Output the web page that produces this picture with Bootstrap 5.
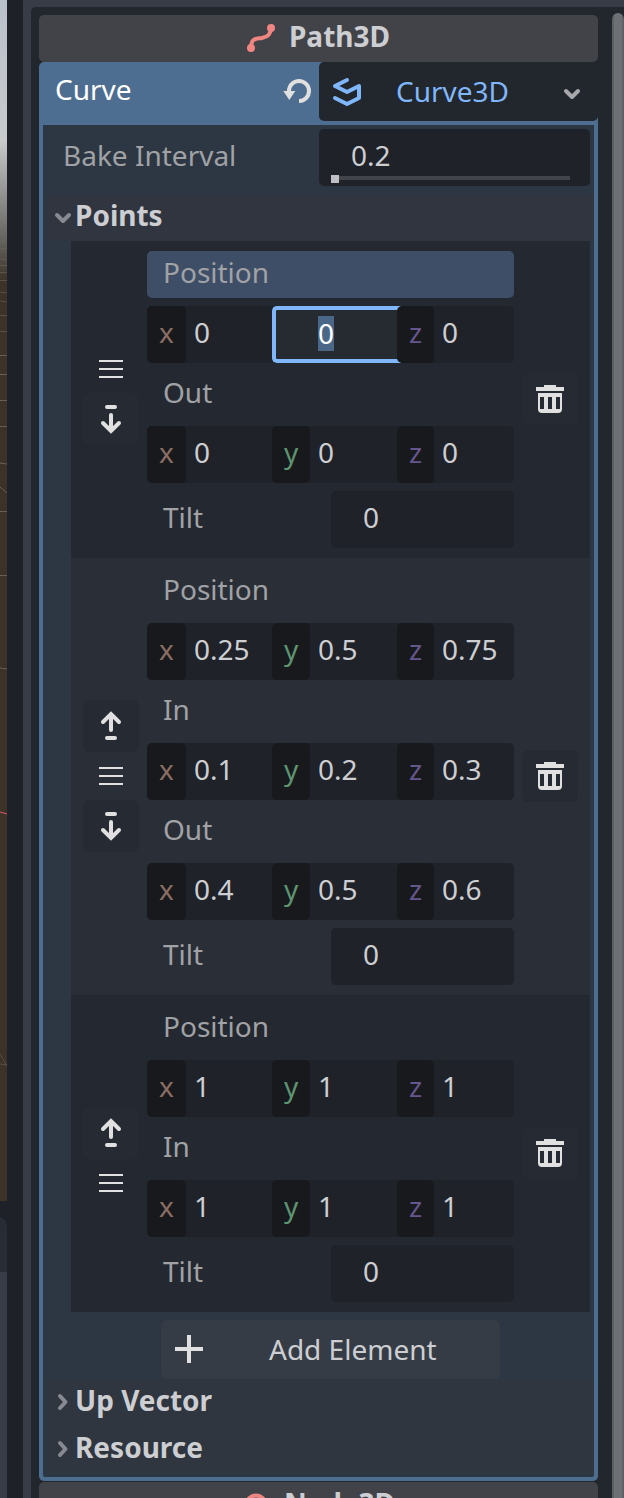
<!DOCTYPE html>
<html lang="en" data-bs-theme="dark">
<head>
<meta charset="utf-8">
<meta name="viewport" content="width=device-width, initial-scale=1">
<title>Inspector</title>
<link href="https://cdn.jsdelivr.net/npm/bootstrap@5.3.0/dist/css/bootstrap.min.css" rel="stylesheet">
<script src="https://cdn.jsdelivr.net/npm/bootstrap@5.3.0/dist/js/bootstrap.bundle.min.js" defer></script>
<style>
  body { font: 28px/38px "Noto Sans", sans-serif; background: #373c47; color: #cdced2; height: 1498px; overflow: hidden; }
  svg { display: block; flex: none; }
  .ico { width: 32px; height: 32px; color: #e0e0e0; }
  .side { width: 7px; }
  .splitter { width: 16px; background: #1e2128; }
  .dock { margin: 7px 0 0 8px; padding: 8px 0 0 8px; background: #22262d; border-top-left-radius: 5px; width: 593px; height: 1491px; }
  .inspector { width: 559px; }
  .scroller { width: 12px; margin: -2px 0 0 14px; border-radius: 6px 6px 0 0; background: linear-gradient(90deg, #5d6062 0 2px, #6d7074 2px 10px, #5f6264 10px); }
  .cat { height: 47px; padding-bottom: 5px; gap: 12px; background: #424349; border-radius: 5px; font-weight: 700; }
  .cat .ico { margin: 4px 0 0 -2px; color: #ef8681; }
  .res { background: #4e6e91; border-radius: 5px 0 5px 5px; height: 1419px; padding: 0 4px 4px; margin-bottom: 1px; }
  .res-head { height: 63px; color: #fff; margin: 0 -4px; }
  .res-head .nm { padding: 8px 0 0 16px; width: 241px; }
  .res-head .undo { margin-top: 13px; }
  .pick { width: 279px; height: 59px; background: #22262d; color: #80b7fb; border-radius: 5px 0 5px 5px; padding-left: 12px; }
  .pick .ico { color: #80b7fb; }
  .pick .txt { margin: -2px 0 0 33px; width: 163px; }
  .pick .arrow { margin: 4px 0 0 -3px; color: #a6a8ab; }
  .res-body { background: #2d3743; height: 1352px; border-radius: 0 0 2px 2px; }
  .bake { height: 69px; padding: 4px 4px 0 20px; }
  .bake .fld { width: 271px; padding-left: 32px; }
  .bake .nm { color: #a0a2a5; margin-top: 7px; width: 256px; }
  .fld { height: 57px; background: #1f2229; border-radius: 5px; padding-top: 7px; position: relative; white-space: pre; }
  .track { position: absolute; left: 12px; top: 47px; width: 239px; height: 4px; background: #424449; }
  .grab { position: absolute; left: 0; top: -1px; width: 8px; height: 8px; background: #bfc0c5; }
  .sect { height: 47px; margin-left: 4px; padding: 2px 0 0 28px; background: #303540; font-weight: 700; position: relative; }
  .sect svg { position: absolute; left: 0; top: 8px; color: #878a91; }
  .sect.tail { background: #303640; }
  .sect.tail svg { top: 7px; }
  .items { margin: 0 4px 0 28px; }
  .pt { background: #242830; padding: 10px 12px; }
  .pt.alt { background: #2a2e37; }
  .pt .moves { width: 56px; padding-bottom: 1px; gap: 8px; margin-right: 8px; }
  .sq { width: 56px; height: 52px; padding: 0; border: 0; border-radius: 6px; background: #262a32; display: flex; align-items: center; justify-content: center; }
  .trash { margin: 0 0 1px 8px; }
  .props { width: 367px; gap: 8px; }
  .lbl { height: 47px; padding: 2px 0 0 16px; color: #a0a2a5; border-radius: 5px; }
  .lbl.on { background: #3f4e67; }
  .vec { height: 57px; background: #1f2229; border-radius: 5px; display: grid; grid-template-columns: 39px 86px 38px 87px 37px 80px; }
  .vec > span { padding: 7px 0 0 8px; white-space: nowrap; }
  .vec > b { font-weight: 400; background: #18191d; border-radius: 5px; padding: 7px 0 0 12px; position: relative; z-index: 2; }
  .ax { color: #8b6d63; } .ay { color: #5e9470; } .az { color: #65578e; }
  .vec > .edit { grid-column: span 2; background: #262b32; border: 4px solid #80b7fb; border-right: 0; border-radius: 5px 0 0 5px; margin-right: -4px; padding: 6px 0 0 42px; color: #fff; line-height: 35px; }
  .edit i { font-style: normal; display: inline-block; background: #4b6788; height: 35px; line-height: 35px; }
  .tilt { height: 57px; }
  .tilt .lbl { width: 184px; padding-top: 7px; }
  .tilt .fld { width: 183px; padding-left: 32px; }
  .add { width: 339px; height: 59px; margin: 8px 0 0 118px; border: 0; border-radius: 6px; background: #363c46; color: #cdced2; font-size: 28px; line-height: 38px; padding: 0 0 2px 12px; display: flex; align-items: center; }
  .add .ico { margin-right: 64px; }
</style>
</head>
<body>
<svg width="0" height="0" class="position-absolute">
  <defs>
    <symbol id="grip" viewBox="0 0 32 32"><path d="M4 8h24M4 16h24M4 24h24" stroke="currentColor" stroke-width="2"/></symbol>
    <symbol id="down" viewBox="0 0 32 32"><path d="M12 4h8M16 12v15M8 20l8 8 8-8" fill="none" stroke="currentColor" stroke-width="4" stroke-linecap="round"/></symbol>
    <symbol id="up" viewBox="0 0 32 32"><path d="M12 28h8M16 20V5M8 12l8-8 8 8" fill="none" stroke="currentColor" stroke-width="4" stroke-linecap="round"/></symbol>
    <symbol id="bin" viewBox="0 0 32 32"><path fill="currentColor" fill-rule="evenodd" d="M10 2h12v2h8v4H2V4h8zM4 10h24v16q0 4-4 4H8q-4 0-4-4zM6 14v12h4V14zM14 14v12h4V14zM22 14v12h4V14z"/></symbol>
    <symbol id="chev-d" viewBox="0 0 32 32"><path d="M10 13l6 6 6-6" fill="none" stroke="currentColor" stroke-width="4" stroke-linecap="round" stroke-linejoin="round"/></symbol>
    <symbol id="chev-r" viewBox="0 0 32 32"><path d="M13 10l5.500 6-5.500 6" fill="none" stroke="currentColor" stroke-width="4" stroke-linecap="round" stroke-linejoin="round"/></symbol>
  </defs>
</svg>

<div class="d-flex">
  <!-- edge of the 3D viewport -->
  <svg class="side" width="7" height="1498">
    <defs><linearGradient id="sky" x2="0" y2="1"><stop offset="0" stop-color="#bac0cb"/><stop offset=".5" stop-color="#c8cacc"/><stop offset=".67" stop-color="#989998"/><stop offset=".86" stop-color="#64625e"/><stop offset="1" stop-color="#3d342a"/></linearGradient></defs>
    <path fill="#3c3228" d="M0 0h7v1201H0z"/>
    <path fill="url(#sky)" d="M0 0h7v280H0z"/>
    <path d="M0 241.500h7M0 248.500h7M0 259l7 1M0 265.500h7M0 272.500h7M0 280.500h7M0 292l7 1M0 301l7 1M0 315.500h7M0 331.500h7M0 1054l7 12M0 1064l7 1" stroke="#6d6861" stroke-opacity=".55" fill="none"/>
    <path d="M0 355.500h7M0 374.500h7M0 400.500h7M0 426.500h7M0 463l7 1M0 487l7 6M0 511.500h7M0 575.500h7M0 668l7 1" stroke="#716b63" stroke-opacity=".8" fill="none"/>
    <path d="M0 812l7 2" stroke="#dc5568" fill="none"/>
    <path fill="#1e2128" d="M0 1201h7v71H0z"/>
    <path fill="#282c34" d="M0 1217q7 2 7 10v45H0z"/>
    <path fill="#373c47" d="M0 1272h7v226H0z"/>
  </svg>
  <div class="splitter"></div>

  <main class="dock d-flex">
    <div class="inspector">
      <div class="cat d-flex align-items-center justify-content-center">
        <svg class="ico" viewBox="0 0 32 32"><path d="M6 26C6 15 12 17 17 16S26 13 26 6" fill="none" stroke="currentColor" stroke-width="4"/><circle cx="6" cy="26" r="4" fill="currentColor"/><circle cx="26" cy="6" r="4" fill="currentColor"/></svg>
        <span>Path3D</span>
      </div>

      <section class="res">
        <div class="res-head d-flex">
          <div class="nm">Curve</div>
          <svg class="ico undo" viewBox="0 0 32 32"><path d="M9 17A10 10 0 1 1 19 27" transform="translate(0 -1)" fill="none" stroke="currentColor" stroke-width="4"/><path d="M3.300 16h12L9.300 25z" fill="currentColor"/></svg>
          <div class="pick d-flex align-items-center ms-auto">
            <svg class="ico" viewBox="0 0 32 32"><path d="M16 4L4 10l12 6 12-6v12l-12 6-12-6" fill="none" stroke="currentColor" stroke-width="4" stroke-linecap="round" stroke-linejoin="round"/></svg>
            <span class="txt">Curve3D</span>
            <svg class="ico arrow"><use href="#chev-d"/></svg>
          </div>
        </div>

        <div class="res-body">
          <div class="bake d-flex">
            <div class="nm">Bake Interval</div>
            <div class="fld">0.2<div class="track"><div class="grab"></div></div></div>
          </div>
          <div class="sect"><svg class="ico"><use href="#chev-d"/></svg>Points</div>

          <div class="items">
            <div class="pt d-flex align-items-center">
              <div class="moves d-flex flex-column align-items-center">
                <svg class="ico"><use href="#grip"/></svg>
                <button class="sq"><svg class="ico"><use href="#down"/></svg></button>
              </div>
              <div class="props d-flex flex-column">
                <div class="lbl on">Position</div>
                <div class="vec"><b class="ax">x</b><span>0</span><span class="edit"><i>0</i></span><b class="az">z</b><span>0</span></div>
                <div class="lbl">Out</div>
                <div class="vec"><b class="ax">x</b><span>0</span><b class="ay">y</b><span>0</span><b class="az">z</b><span>0</span></div>
                <div class="tilt d-flex"><div class="lbl">Tilt</div><div class="fld">0</div></div>
              </div>
              <button class="sq trash"><svg class="ico"><use href="#bin"/></svg></button>
            </div>

            <div class="pt alt d-flex align-items-center">
              <div class="moves d-flex flex-column align-items-center">
                <button class="sq"><svg class="ico"><use href="#up"/></svg></button>
                <svg class="ico"><use href="#grip"/></svg>
                <button class="sq"><svg class="ico"><use href="#down"/></svg></button>
              </div>
              <div class="props d-flex flex-column">
                <div class="lbl">Position</div>
                <div class="vec"><b class="ax">x</b><span>0.25</span><b class="ay">y</b><span>0.5</span><b class="az">z</b><span>0.75</span></div>
                <div class="lbl">In</div>
                <div class="vec"><b class="ax">x</b><span>0.1</span><b class="ay">y</b><span>0.2</span><b class="az">z</b><span>0.3</span></div>
                <div class="lbl">Out</div>
                <div class="vec"><b class="ax">x</b><span>0.4</span><b class="ay">y</b><span>0.5</span><b class="az">z</b><span>0.6</span></div>
                <div class="tilt d-flex"><div class="lbl">Tilt</div><div class="fld">0</div></div>
              </div>
              <button class="sq trash"><svg class="ico"><use href="#bin"/></svg></button>
            </div>

            <div class="pt d-flex align-items-center">
              <div class="moves d-flex flex-column align-items-center">
                <button class="sq"><svg class="ico"><use href="#up"/></svg></button>
                <svg class="ico"><use href="#grip"/></svg>
              </div>
              <div class="props d-flex flex-column">
                <div class="lbl">Position</div>
                <div class="vec"><b class="ax">x</b><span>1</span><b class="ay">y</b><span>1</span><b class="az">z</b><span>1</span></div>
                <div class="lbl">In</div>
                <div class="vec"><b class="ax">x</b><span>1</span><b class="ay">y</b><span>1</span><b class="az">z</b><span>1</span></div>
                <div class="tilt d-flex"><div class="lbl">Tilt</div><div class="fld">0</div></div>
              </div>
              <button class="sq trash"><svg class="ico"><use href="#bin"/></svg></button>
            </div>
          </div>

          <button class="add"><svg class="ico" viewBox="0 0 32 32"><path d="M2 16h28M16 2v28" stroke="currentColor" stroke-width="4"/></svg>Add Element</button>
          <div class="sect tail"><svg class="ico"><use href="#chev-r"/></svg>Up Vector</div>
          <div class="sect tail"><svg class="ico"><use href="#chev-r"/></svg>Resource</div>
        </div>
      </section>

      <div class="cat d-flex align-items-center justify-content-center">
        <svg class="ico" viewBox="0 0 32 32"><circle cx="16" cy="16" r="9.500" fill="none" stroke="currentColor" stroke-width="4"/></svg>
        <span>Node3D</span>
      </div>
    </div>
    <div class="scroller"></div>
  </main>
</div>
</body>
</html>
